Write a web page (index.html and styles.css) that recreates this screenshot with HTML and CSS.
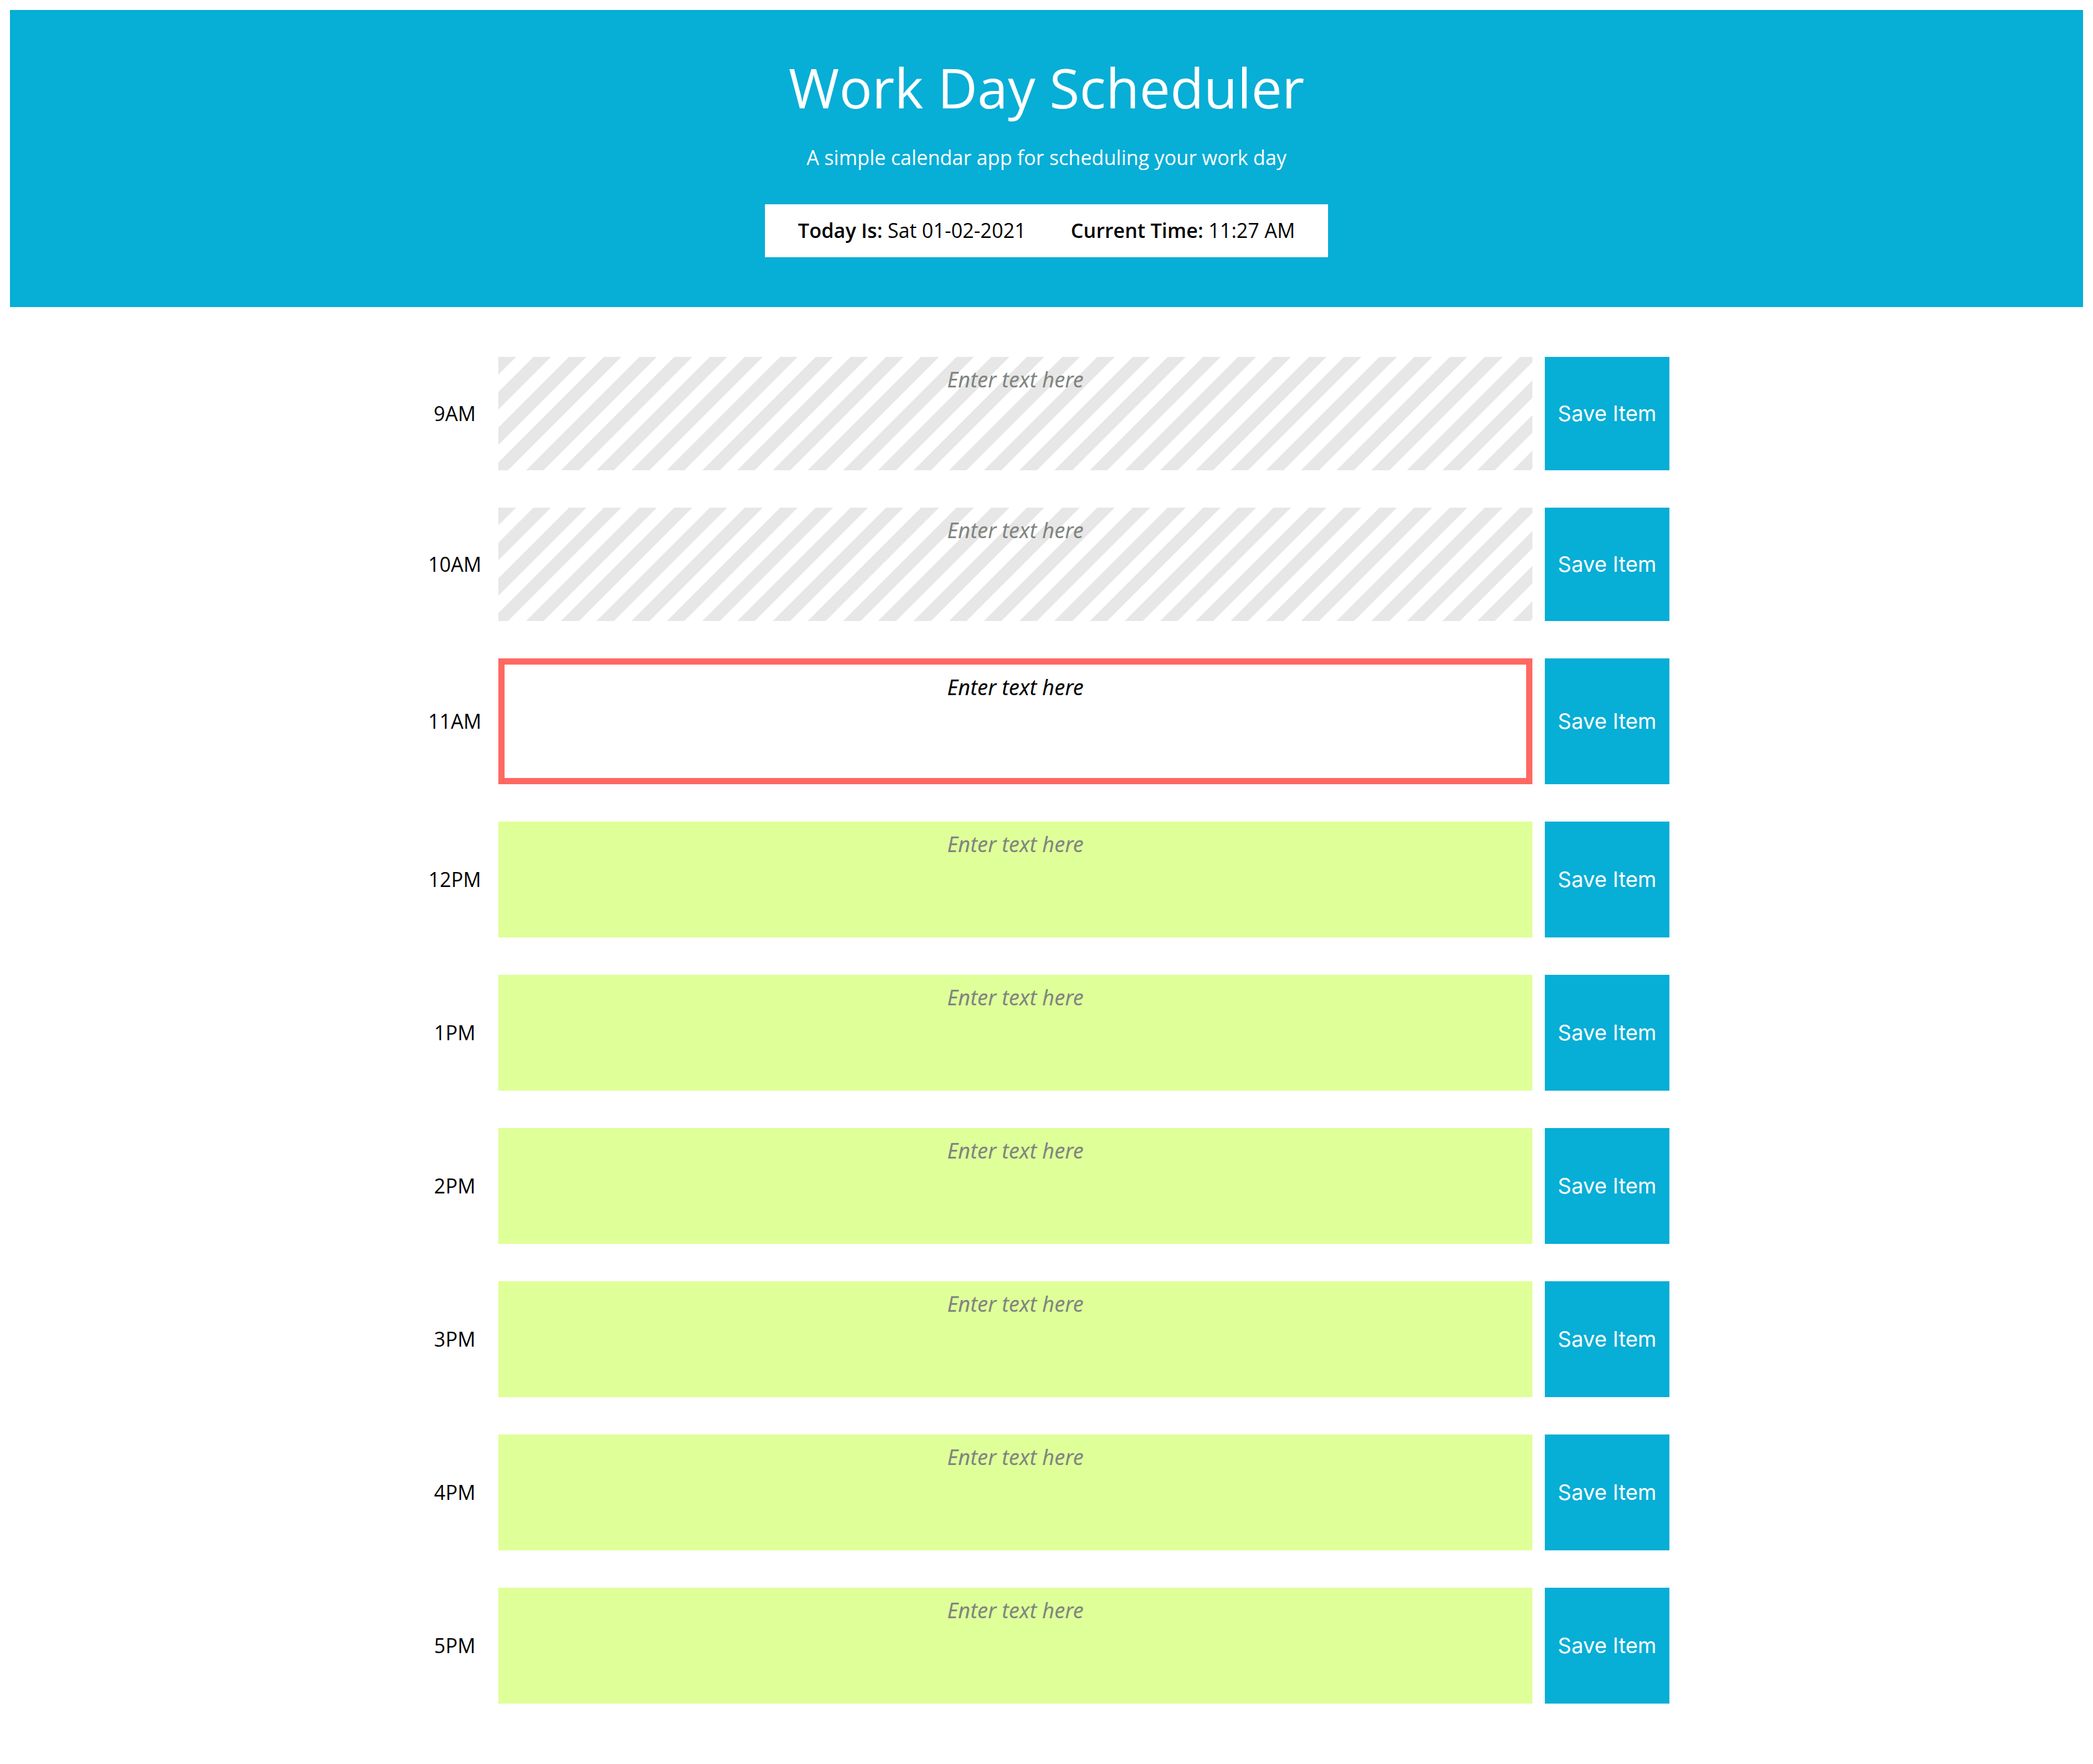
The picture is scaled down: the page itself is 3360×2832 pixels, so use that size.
FILE: index.html
```html
<!DOCTYPE html>
<html lang="en">
<head>
<meta charset="utf-8">
<title>Work Day Scheduler</title>
<link rel="stylesheet" href="styles.css">
</head>
<body>
<header class="jumbotron">
  <h1 class="title">Work Day Scheduler</h1>
  <p class="lead">A simple calendar app for scheduling your work day</p>
  <div class="today">
    <span class="today-item"><strong>Today Is:</strong> Sat 01-02-2021</span>
    <span class="today-item"><strong>Current Time:</strong> 11:27 AM</span>
  </div>
</header>
<main class="container">
  <div class="time-block">
    <div class="hour">9AM</div>
    <textarea class="description past" placeholder="Enter text here"></textarea>
    <button class="saveBtn">Save Item</button>
  </div>
  <div class="time-block">
    <div class="hour">10AM</div>
    <textarea class="description past" placeholder="Enter text here"></textarea>
    <button class="saveBtn">Save Item</button>
  </div>
  <div class="time-block">
    <div class="hour">11AM</div>
    <textarea class="description present" placeholder="Enter text here"></textarea>
    <button class="saveBtn">Save Item</button>
  </div>
  <div class="time-block">
    <div class="hour">12PM</div>
    <textarea class="description future" placeholder="Enter text here"></textarea>
    <button class="saveBtn">Save Item</button>
  </div>
  <div class="time-block">
    <div class="hour">1PM</div>
    <textarea class="description future" placeholder="Enter text here"></textarea>
    <button class="saveBtn">Save Item</button>
  </div>
  <div class="time-block">
    <div class="hour">2PM</div>
    <textarea class="description future" placeholder="Enter text here"></textarea>
    <button class="saveBtn">Save Item</button>
  </div>
  <div class="time-block">
    <div class="hour">3PM</div>
    <textarea class="description future" placeholder="Enter text here"></textarea>
    <button class="saveBtn">Save Item</button>
  </div>
  <div class="time-block">
    <div class="hour">4PM</div>
    <textarea class="description future" placeholder="Enter text here"></textarea>
    <button class="saveBtn">Save Item</button>
  </div>
  <div class="time-block">
    <div class="hour">5PM</div>
    <textarea class="description future" placeholder="Enter text here"></textarea>
    <button class="saveBtn">Save Item</button>
  </div>
</main>
</body>
</html>
```

FILE: styles.css
```css
* { box-sizing: border-box; }

body {
  margin: 16px;
  font-family: "Open Sans", "Noto Sans", sans-serif;
  font-size: 32px;
  line-height: 1.5;
  color: #000;
  background: #fff;
}

.jumbotron {
  background: #07aed6;
  color: #fff;
  text-align: center;
  padding: 72px 0 80px;
  display: flex;
  flex-direction: column;
  align-items: center;
}

.title {
  margin: 0;
  font-size: 88px;
  font-weight: 400;
  line-height: 1.2;
}

.lead {
  margin: 35px 0 0;
  font-size: 32px;
  line-height: 1.5;
}

.today {
  margin-top: 51px;
  background: #fff;
  color: #000;
  padding: 18.5px 53px;
  display: flex;
  gap: 72px;
  line-height: 48px;
}

.today strong { font-weight: 600; }

.container {
  width: 2040px;
  margin: 80px auto 0;
  padding-right: 20px;
}

.time-block {
  display: flex;
  align-items: stretch;
  margin-bottom: 60px;
}

.hour {
  width: 140px;
  flex: none;
  display: flex;
  align-items: center;
  justify-content: center;
}

.description {
  width: 1660px;
  flex: none;
  margin: 0 20px 0 0;
  border: none;
  outline: none;
  resize: none;
  padding: 12px 20px;
  font-family: "Noto Sans", "Open Sans", sans-serif;
  font-style: italic;
  font-size: 34px;
  line-height: 48px;
  text-align: center;
  color: #000;
  display: block;
}

.description::placeholder {
  color: #7f8580;
  opacity: 1;
}

.past {
  height: 182px;
  background: repeating-linear-gradient(135deg, #e7e7e7 0 20px, #ffffff 20px 40px);
}

.present {
  height: 202px;
  background: #fff;
  border: 10px solid #ff6961;
  padding-top: 12px;
}

.present::placeholder { color: #000; }

.future {
  height: 186px;
  background: #dfff99;
}

.saveBtn {
  width: 200px;
  flex: none;
  border: none;
  margin: 0;
  padding: 0;
  background: #07aed6;
  color: #fff;
  font-family: "Inter", "Liberation Sans", sans-serif;
  font-size: 34px;
  font-weight: 400;
}
```
